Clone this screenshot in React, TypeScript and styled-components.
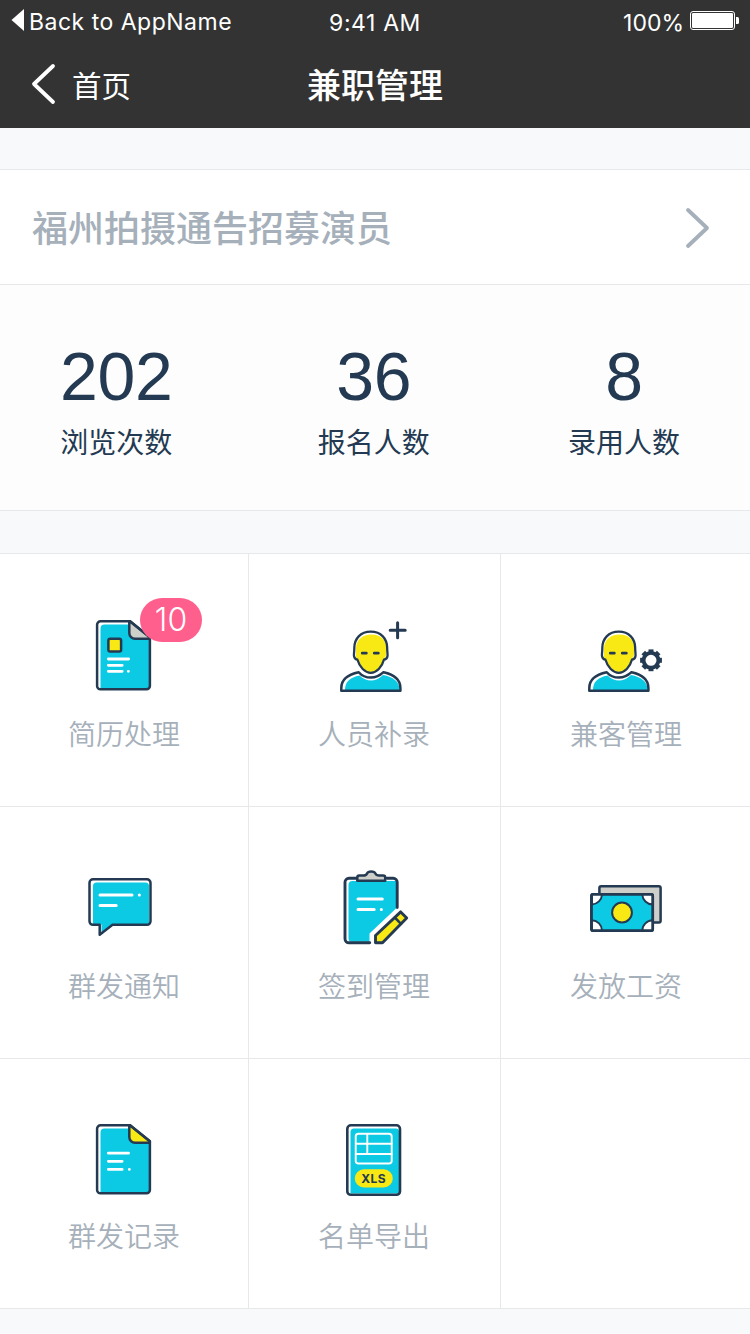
import React from "react";
import styled, { createGlobalStyle } from "styled-components";

const c = {
  ink: "#233a52",
  cyan: "#0cc9e4",
  yellow: "#f8e914",
  grey: "#cfcfca",
  muted: "#a6b0ba",
  line: "#e6e8ea",
  bar: "#333333",
  pink: "#ff5f8d",
};

const GlobalStyle = createGlobalStyle`
  * { box-sizing: border-box; }
  body {
    margin: 0;
    background: #f8f9fb;
    font-family: "Liberation Sans", "Noto Sans CJK SC", sans-serif;
  }
`;

const Page = styled.div`
  width: 750px;
  height: 1334px;
  overflow: hidden;
  display: flex;
  flex-direction: column;
  background: #f8f9fb;
`;

const Header = styled.header`
  height: 128px;
  background: ${c.bar};
  color: #fff;
`;

const StatusBar = styled.div`
  height: 42px;
  display: grid;
  grid-template-columns: 1fr auto 1fr;
  align-items: center;
  padding: 0 11px;
  font-family: Inter, sans-serif;
  font-size: 23px;
  line-height: 42px;
`;

const BackToApp = styled.div`
  display: flex;
  align-items: center;
  gap: 5px;
  letter-spacing: 0.5px;
  white-space: nowrap;
  svg { margin-bottom: 4px; }
`;

const Clock = styled.div`
  padding-top: 2px;
  letter-spacing: 0.6px;
`;

const Power = styled.div`
  display: flex;
  align-items: center;
  justify-content: flex-end;
  gap: 6px;
  padding-top: 2px;
  svg { margin-bottom: 4px; }
`;

const NavBar = styled.nav`
  height: 84px;
  display: grid;
  grid-template-columns: 1fr auto 1fr;
  align-items: center;
  padding: 0 30px;
`;

const BackLink = styled.div`
  display: flex;
  align-items: center;
  gap: 15px;
  font-size: 29.5px;
  line-height: 44px;
  span { padding-top: 5px; }
`;

const NavTitle = styled.h1`
  margin: 0;
  padding-top: 3px;
  font-size: 34px;
  line-height: 48px;
  font-weight: 500;
`;

const Card = styled.section`
  margin-top: 41px;
  border-top: 1px solid ${c.line};
  border-bottom: 1px solid ${c.line};
  background: #fff;
`;

const JobRow = styled.div`
  height: 115px;
  display: flex;
  align-items: center;
  justify-content: space-between;
  padding: 0 40px 0 32px;
  border-bottom: 1px solid ${c.line};
  color: ${c.muted};
  font-size: 36px;
  font-weight: 500;
  span { padding-bottom: 2px; }
  svg { margin-top: 2px; }
`;

const Stats = styled.div`
  height: 225px;
  display: flex;
  justify-content: space-between;
  padding: 55px 70px 0 60px;
  background: #fdfdfd;
  color: ${c.ink};
`;

const Stat = styled.div`
  display: flex;
  flex-direction: column;
  align-items: center;
  &:nth-child(2) { padding-left: 7px; }
`;

const StatValue = styled.div`
  font-size: 68px;
  line-height: 72px;
  letter-spacing: -0.3px;
`;

const StatLabel = styled.div`
  margin-top: 12px;
  font-size: 28px;
  line-height: 40px;
`;

const Grid = styled.section`
  margin-top: 42px;
  display: grid;
  grid-template-columns: 249px 252px 249px;
  grid-template-rows: 253px 252px 250px;
  border-top: 1px solid ${c.line};
`;

const Tile = styled.div<{ $top: number }>`
  display: flex;
  flex-direction: column;
  align-items: center;
  padding-top: ${(p) => p.$top}px;
  background: #fff;
  border-bottom: 1px solid ${c.line};
  border-right: 1px solid ${c.line};
  &:nth-child(3n + 2) { padding-right: 1px; }
  &:nth-child(3n) { padding-left: 1px; border-right: 0; }
`;

const IconBox = styled.div`
  position: relative;
  width: 100px;
  height: 90px;
  svg { display: block; }
`;

const Badge = styled.span`
  position: absolute;
  left: 66px;
  top: -12px;
  width: 62px;
  height: 44px;
  border-radius: 22px;
  background: ${c.pink};
  color: #fff;
  font-family: Inter, sans-serif;
  font-weight: 300;
  font-size: 32px;
  line-height: 44px;
  text-align: center;
`;

const TileLabel = styled.div`
  margin-top: 16px;
  font-size: 28px;
  line-height: 40px;
  font-weight: 350;
  color: ${c.muted};
`;

const Svg = ({ origin, children }: { origin: string; children: React.ReactNode }) => (
  <svg width="100" height="90" viewBox={`${origin} 100 90`} fill="none" stroke={c.ink} strokeWidth="2.5" strokeLinecap="round" strokeLinejoin="round">
    {children}
  </svg>
);

const Sheet = ({ fold }: { fold: string }) => (
  <>
    <path d="M49.5 15.1H20.500a3.400 3.400 0 0 0-3.400 3.400V79.900a3.400 3.400 0 0 0 3.400 3.400H66.500a3.400 3.400 0 0 0 3.400-3.400V31.500z" fill="#fff" stroke="none" />
    <path d="M49 18.500H24.500a4 4 0 0 0-4 4V82.500H66.500a3 3 0 0 0 3-3V32L50 17z" fill={c.cyan} stroke="none" />
    <path d="M49.300 15.500V27a5.800 5.800 0 0 0 5.800 5.800H69.800V31.200L50 15.300z" fill={fold} />
    <path d="M50 15.300H20.500a3.400 3.400 0 0 0-3.400 3.400V79.900a3.400 3.400 0 0 0 3.400 3.400H66.500a3.400 3.400 0 0 0 3.400-3.400V31.200z" />
  </>
);

const ResumeIcon = () => (
  <Svg origin="-6 4">
    <Sheet fold={c.grey} />
    <rect x="28.400" y="32.800" width="12.700" height="12.700" rx="1.800" fill={c.yellow} />
    <path d="M28.300 53H48.600M28.300 59.300H42.200M28.300 65.300H42.200M48.300 65.300h.1" stroke="#fff" strokeWidth="2.800" />
  </Svg>
);

const RecordIcon = () => (
  <Svg origin="-6 2">
    <Sheet fold={c.yellow} />
    <path d="M28.300 43.200H48.600M28.300 51.300H42.200M28.300 59.400H42.200M49.300 59.400h.1" stroke="#fff" strokeWidth="2.700" />
  </Svg>
);

const Person = () => (
  <>
    <path d="M20 80C20 72 25 67.300 34.500 65.500C38 69 42 70.500 46 70.500S54 69 58 65C68 67 74.500 71 74.500 80z" fill={c.cyan} stroke="none" />
    <path d="M16.300 80.700H75.400V78C75.400 69.500 69 64.500 58.500 62.200C54.500 66 50.500 67.600 46 67.600S37 66 33.700 62.200C22.500 64.500 16.300 70 16.300 78z" />
    <path d="M46.500 24.500C37 24.500 31 30.500 31 38.500V46.500C31.300 48.500 32.300 48.800 33.500 49.300C35.500 56.500 40.500 62 46 62C51.500 62 56.500 56.500 58.200 49.200C60 48.500 61.400 45.500 61.400 42V38.500C61.400 30.500 56 24.500 46.500 24.500z" fill={c.yellow} stroke="none" />
    <path d="M45.800 21.700C35.500 21.700 29.300 28.600 29.300 38C29.500 41 28.500 44 29.100 46.500C29.500 48.500 31 49.500 32.500 49.700C34.500 57 40 62.800 45.800 62.800S57 57 58.900 49.700C60.500 49.500 62 48.500 62.400 46.500C63 44 62 41 62.200 38C62.200 28.600 56 21.700 45.800 21.700z" strokeWidth="2.300" />
    <path d="M37.300 43.200H41.300M49.300 43.200H53.300" strokeWidth="2.800" />
  </>
);

const AddPersonIcon = () => (
  <Svg origin="-1 0">
    <Person />
    <path d="M65.200 20.300H80.200M72.600 12.800V27.800" strokeWidth="3" />
  </Svg>
);

const ManagePersonIcon = () => (
  <Svg origin="3 0">
    <Person />
    <circle cx="78" cy="50.300" r="7.400" strokeWidth="3.800" />
    {[0, 45, 90, 135, 180, 225, 270, 315].map((a) => (
      <path key={a} d="M78 42.500V39.400" strokeWidth="5" strokeLinecap="butt" transform={`rotate(${a} 78 50.300)`} />
    ))}
  </Svg>
);

const MessageIcon = () => (
  <Svg origin="-1 -3">
    <path d="M18 21a3.500 3.500 0 0 1 3.500-3.500H70.500a3.500 3.500 0 0 1 3.500 3.500V59H37L26.500 67.500V59.500H18z" fill={c.cyan} stroke="none" />
    <path d="M18 14.300H72a3.500 3.500 0 0 1 3.500 3.500V56.300a3.500 3.500 0 0 1-3.500 3.500H37.500L24.700 69.700V59.800H18a3.500 3.500 0 0 1-3.500-3.500V17.800a3.500 3.500 0 0 1 3.500-3.500z" />
    <path d="M25 30H57M64.300 30h.1M25 40.400H41.200" stroke="#fff" strokeWidth="3" />
  </Svg>
);

const SignInIcon = () => (
  <Svg origin="-1 2">
    <path d="M23.500 25a4 4 0 0 1 4-4H71V48.500L44.500 73.500V81.800H27a3.500 3.500 0 0 1-3.500-3.500z" fill={c.cyan} stroke="none" />
    <path d="M31 18.300H24a4 4 0 0 0-4 4V78.800a4 4 0 0 0 4 4H44.700M62 18.300H68.200a4 4 0 0 1 4 4V47.500" strokeWidth="2.900" />
    <path d="M32.300 20.800V17.500a2 2 0 0 1 2-2H38.500C40.500 15.500 41.500 14.800 42 13.500C42.600 12.300 44 11.600 46.200 11.600S49.800 12.300 50.400 13.500C51 14.800 52 15.500 54 15.500H58.200a2 2 0 0 1 2 2V20.800z" fill={c.grey} />
    <path d="M33 39H57.300M33 49.500H49.200M56.300 49.500h.1" stroke="#fff" strokeWidth="3" />
    <path d="M50.500 82.700V75.500L75.700 51.900L81.700 58L57.500 82.700z" fill={c.yellow} strokeWidth="2.900" />
    <path d="M69.800 57.500L76 63.800" />
  </Svg>
);

const SalaryIcon = () => (
  <Svg origin="1 -8">
    <rect x="24.400" y="16.200" width="61.200" height="36.400" rx="1.800" fill={c.grey} />
    <rect x="16.400" y="24.300" width="61.400" height="36.400" rx="1.800" fill={c.cyan} />
    <g fill="#fff" strokeWidth="1.900">
      <path d="M17 34.500A10.500 10.500 0 0 0 27 24.500H17z" />
      <path d="M67.300 24.500A10.500 10.500 0 0 0 77.500 34.500V24.500z" />
      <path d="M17 50.200A10.500 10.500 0 0 1 27 60.500H17z" />
      <path d="M67.300 60.500A10.500 10.500 0 0 1 77.500 50.200V60.500z" />
    </g>
    <rect x="16.400" y="24.300" width="61.400" height="36.400" rx="1.800" />
    <circle cx="47" cy="42.500" r="9.900" fill={c.yellow} strokeWidth="2" />
  </Svg>
);

const ExportIcon = () => (
  <Svg origin="-1 2">
    <rect x="22.300" y="15.300" width="52.700" height="69.500" rx="4" fill="#fff" stroke="none" />
    <path d="M25.500 22a3.500 3.500 0 0 1 3.500-3.500H71a3 3 0 0 1 3 3V83.500H25.500z" fill={c.cyan} stroke="none" />
    <rect x="22.300" y="15.300" width="52.700" height="69.500" rx="3.600" strokeWidth="2.600" />
    <g stroke="#fff" strokeWidth="1.900">
      <rect x="30.700" y="23.700" width="36" height="29.800" rx="2.800" />
      <path d="M31 33.800H66.500M31 44H66.500M42.300 24V44" />
    </g>
    <rect x="29.800" y="59.300" width="38" height="18.200" rx="9.100" fill={c.yellow} stroke="none" />
    <text x="48.700" y="73" textAnchor="middle" fontFamily="Inter, sans-serif" fontWeight="700" fontSize="12" letterSpacing="0.400" fill={c.ink} stroke="none">XLS</text>
  </Svg>
);

const stats = [
  { value: "202", label: "浏览次数" },
  { value: "36", label: "报名人数" },
  { value: "8", label: "录用人数" },
];

const tiles = [
  { label: "简历处理", Icon: ResumeIcon, badge: "10" },
  { label: "人员补录", Icon: AddPersonIcon },
  { label: "兼客管理", Icon: ManagePersonIcon },
  { label: "群发通知", Icon: MessageIcon },
  { label: "签到管理", Icon: SignInIcon },
  { label: "发放工资", Icon: SalaryIcon },
  { label: "群发记录", Icon: RecordIcon },
  { label: "名单导出", Icon: ExportIcon },
  {},
];

const rowTops = [56, 55, 53];

export default function App() {
  return (
    <Page>
      <GlobalStyle />
      <Header>
        <StatusBar>
          <BackToApp>
            <svg width="13" height="22" viewBox="0 0 13 22"><path d="M13 0V22L0.500 11z" fill="#fff" /></svg>
            Back to AppName
          </BackToApp>
          <Clock>9:41 AM</Clock>
          <Power>
            100%
            <svg width="49" height="20" viewBox="0 0 49 20">
              <rect x="0.500" y="0.500" width="44" height="18" rx="2.500" fill="none" stroke="#fff" />
              <rect x="2" y="2" width="41" height="15" rx="1.200" fill="#fff" />
              <path d="M46 6h1.500a1.500 1.500 0 0 1 1.500 1.500v4a1.500 1.500 0 0 1-1.500 1.500H46z" fill="#fff" />
            </svg>
          </Power>
        </StatusBar>
        <NavBar>
          <BackLink>
            <svg width="27" height="44" viewBox="0 0 27 44" fill="none" stroke="#fff" strokeWidth="3.800" strokeLinecap="round" strokeLinejoin="round"><path d="M23 4L4 22L23 40" /></svg>
            <span>首页</span>
          </BackLink>
          <NavTitle>兼职管理</NavTitle>
        </NavBar>
      </Header>
      <Card>
        <JobRow>
          <span>福州拍摄通告招募演员</span>
          <svg width="26" height="42" viewBox="0 0 26 42" fill="none" stroke={c.muted} strokeWidth="3.800" strokeLinecap="round" strokeLinejoin="round"><path d="M4 3L23 21L4 39" /></svg>
        </JobRow>
        <Stats>
          {stats.map((s) => (
            <Stat key={s.label}>
              <StatValue>{s.value}</StatValue>
              <StatLabel>{s.label}</StatLabel>
            </Stat>
          ))}
        </Stats>
      </Card>
      <Grid>
        {tiles.map(({ label, Icon, badge }, i) => (
          <Tile key={i} $top={rowTops[Math.floor(i / 3)]}>
            {Icon && (
              <IconBox>
                <Icon />
                {badge && <Badge>{badge}</Badge>}
              </IconBox>
            )}
            {label && <TileLabel>{label}</TileLabel>}
          </Tile>
        ))}
      </Grid>
    </Page>
  );
}
